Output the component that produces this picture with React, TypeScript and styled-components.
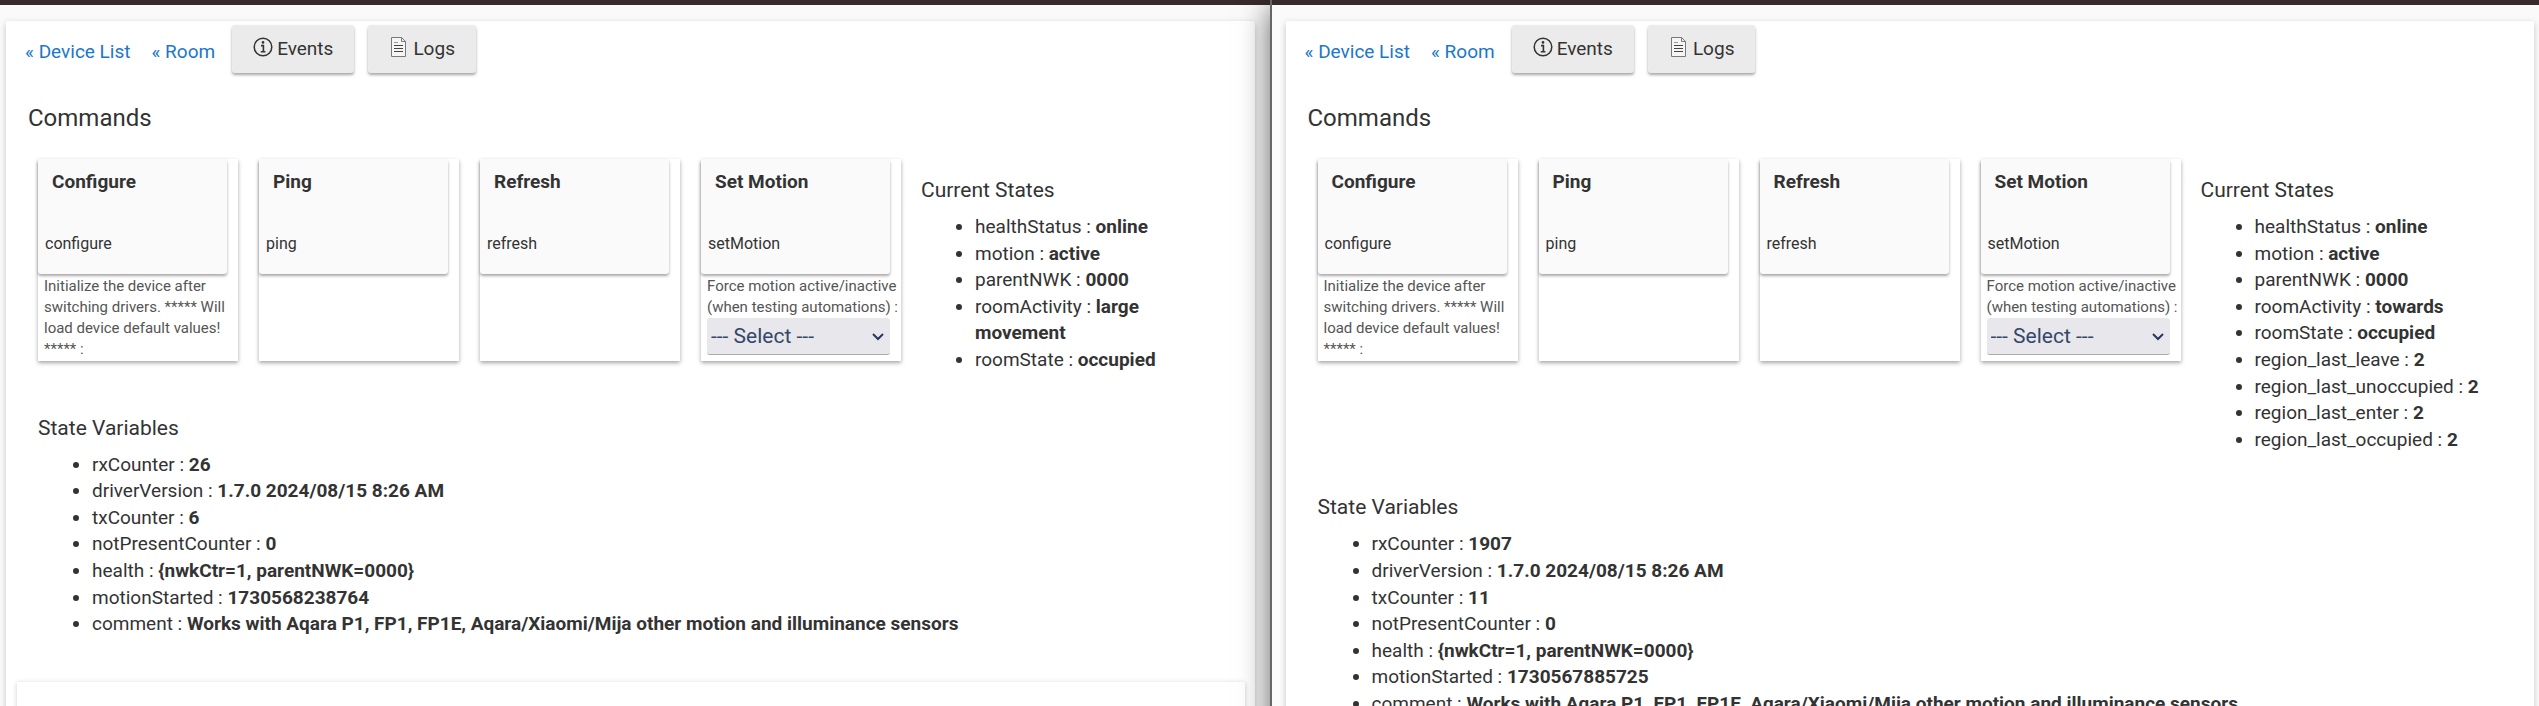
import React from 'react';
import styled, { createGlobalStyle } from 'styled-components';

const GlobalStyle = createGlobalStyle`
  * { box-sizing: border-box; }
  body {
    margin: 0;
    background: #fafafa;
    color: #333;
    font-family: Roboto, "Liberation Sans", sans-serif;
  }
`;

const Split = styled.div`
  display: grid;
  grid-template-columns: 1fr 1fr;
  height: 100vh;
  overflow: hidden;
`;

const Pane = styled.main<{ $front?: boolean }>`
  min-width: 0;
  height: 200vh;
  background: #fafafa;
  ${(p) =>
    p.$front
      ? `border-left: 2px solid #666;
         box-shadow: 0 8px 28px rgba(0, 0, 0, 0.6);
         z-index: 1;`
      : ''}
`;

const TopBar = styled.header`
  height: 5px;
  background: #382c2a;
`;

const Page = styled.section<{ $front?: boolean }>`
  margin: ${(p) => (p.$front ? '16px 5px 0 14px' : '16px 15px 0 6px')};
  padding: 4px 10px 0 11px;
  min-height: 100%;
  background: #fff;
  border-radius: 2px;
  box-shadow: 0 2px 6px rgba(0, 0, 0, 0.22);
`;

const Toolbar = styled.nav`
  display: flex;
  align-items: center;
  gap: 14px;
  height: 48px;
  padding-left: 8px;
`;

const Crumb = styled.a`
  margin-right: 7px;
  padding-top: 6px;
  color: #1a77c9;
  font-size: 19px;
  line-height: 24px;
  text-decoration: none;
  & + button { margin-left: -4px; }
`;

const ToolButton = styled.button`
  display: flex;
  align-items: center;
  gap: 4px;
  height: 48px;
  padding: 0 21px;
  border: 0;
  border-radius: 3px;
  background: #ebebeb;
  box-shadow: 0 2px 3px rgba(0, 0, 0, 0.35);
  color: #333;
  font: 400 19px/24px Roboto, sans-serif;
  svg { display: block; flex: none; margin-bottom: 4px; }
`;

const Heading = styled.h1`
  margin: 28px 0 24px;
  padding-left: 11px;
  font-size: 24px;
  font-weight: 400;
  line-height: 34px;
`;

const Body = styled.div`
  display: flex;
  align-items: flex-start;
  padding: 0 21px;
`;

const Tiles = styled.div`
  display: flex;
  flex: none;
  gap: 21px;
`;

const Tile = styled.article`
  width: 200px;
  height: 202px;
  background: #fff;
  box-shadow: 0 2px 4px rgba(0, 0, 0, 0.35);
`;

const TileButton = styled.button`
  display: flex;
  flex-direction: column;
  justify-content: space-between;
  width: 189px;
  height: 115px;
  padding: 11px 7px 18px;
  border: 0;
  border-radius: 3px;
  background: #fafafa;
  box-shadow: 0 2px 3px rgba(0, 0, 0, 0.35);
  color: #333;
  font: 400 16px/24px Roboto, sans-serif;
  text-align: left;
  strong { padding-left: 7px; font-size: 19px; font-weight: 700; }
`;

const Hint = styled.p`
  margin: 0;
  padding: 2px 0 0 6px;
  color: #555;
  font-size: 15px;
  line-height: 21px;
`;

const Select = styled.select`
  display: block;
  appearance: none;
  width: 183px;
  height: 37px;
  margin-left: 6px;
  padding: 0 4px;
  border: 0;
  border-bottom: 1px solid #aaa;
  border-radius: 3px;
  background: #e8e7ec;
  color: #354769;
  font: 400 21px/36px Roboto, sans-serif;
`;

const SelectBox = styled.div`
  display: grid;
  align-items: center;
  > * { grid-area: 1 / 1; }
  svg { margin-left: 171px; pointer-events: none; }
`;

const States = styled.section`
  flex: 1;
  min-width: 0;
  padding: 18px 0 0 20px;
`;

const Variables = styled.section`
  padding: 41px 21px 0 21px;
`;

const Title = styled.h2`
  margin: 0;
  font-size: 21px;
  font-weight: 400;
  line-height: 27px;
`;

const List = styled.ul`
  margin: 10px 0 0;
  padding: 0 0 0 54px;
  font-size: 19px;
  line-height: 1.4;
  strong { font-weight: 700; }
`;

const NextCard = styled.section`
  height: 200px;
  margin-top: 44px;
  background: #fff;
  box-shadow: 0 1px 5px rgba(0, 0, 0, 0.2);
`;

const InfoIcon = () => (
  <svg width="20" height="20" viewBox="0 0 20 20" fill="none" stroke="#333">
    <circle cx="10" cy="10" r="8.8" strokeWidth="1.5" />
    <path d="M8 8.6h2.4v6M7.8 14.8h4.6" strokeWidth="1.6" />
    <circle cx="10" cy="5.4" r="1.3" fill="#333" stroke="none" />
  </svg>
);

const PageIcon = () => (
  <svg width="20" height="20" viewBox="-1 0 20 20" fill="none" stroke="#7a7a7a">
    <path d="M1.5.5h10l4 4v15h-14z" fill="#f5f5f5" />
    <path d="M11.5.5v4h4" />
    <path d="M4 5.5h4" stroke="#999" />
    <path d="M4 8.5h9M4 11.5h9M4 14.5h9" stroke="#444" />
  </svg>
);

const Chevron = () => (
  <svg width="12" height="8" viewBox="0 0 12 8" fill="none" stroke="#27385a" strokeWidth="2">
    <path d="M1 1l5 5 5-5" />
  </svg>
);

type Entry = [string, string];

const Entries = ({ items }: { items: Entry[] }) => (
  <List>
    {items.map(([name, value]) => (
      <li key={name}>
        {name} : <strong>{value}</strong>
      </li>
    ))}
  </List>
);

interface DeviceProps {
  id: string;
  front?: boolean;
  states: Entry[];
  variables: Entry[];
}

const Device = ({ id, front, states, variables }: DeviceProps) => (
  <Pane $front={front}>
    <TopBar />
    <Page $front={front}>
      <Toolbar>
        <Crumb href="#devices">« Device List</Crumb>
        <Crumb href="#room">« Room</Crumb>
        <ToolButton type="button"><InfoIcon />Events</ToolButton>
        <ToolButton type="button"><PageIcon />Logs</ToolButton>
      </Toolbar>
      <Heading>Commands</Heading>
      <Body>
        <Tiles>
          <Tile>
            <TileButton type="button"><strong>Configure</strong><span>configure</span></TileButton>
            <Hint>
              Initialize the device after switching drivers. ***** Will load device default values! ***** :
            </Hint>
          </Tile>
          <Tile>
            <TileButton type="button"><strong>Ping</strong><span>ping</span></TileButton>
          </Tile>
          <Tile>
            <TileButton type="button"><strong>Refresh</strong><span>refresh</span></TileButton>
          </Tile>
          <Tile>
            <TileButton type="button"><strong>Set Motion</strong><span>setMotion</span></TileButton>
            <Hint>
              <label htmlFor={id}>Force motion active/inactive (when testing automations) :</label>
            </Hint>
            <SelectBox>
              <Select id={id} defaultValue="">
                <option value="">--- Select ---</option>
                <option>active</option>
                <option>inactive</option>
              </Select>
              <Chevron />
            </SelectBox>
          </Tile>
        </Tiles>
        <States>
          <Title>Current States</Title>
          <Entries items={states} />
        </States>
      </Body>
      <Variables>
        <Title>State Variables</Title>
        <Entries items={variables} />
      </Variables>
      <NextCard />
    </Page>
  </Pane>
);

const variables = (rx: string, tx: string, started: string): Entry[] => [
  ['rxCounter', rx],
  ['driverVersion', '1.7.0 2024/08/15 8:26 AM'],
  ['txCounter', tx],
  ['notPresentCounter', '0'],
  ['health', '{nwkCtr=1, parentNWK=0000}'],
  ['motionStarted', started],
  ['comment', 'Works with Aqara P1, FP1, FP1E, Aqara/Xiaomi/Mija other motion and illuminance sensors'],
];

const states = (activity: string): Entry[] => [
  ['healthStatus', 'online'],
  ['motion', 'active'],
  ['parentNWK', '0000'],
  ['roomActivity', activity],
  ['roomState', 'occupied'],
];

export default function App() {
  return (
    <>
      <GlobalStyle />
      <Split>
        <Device
          id="motion-left"
          states={states('large movement')}
          variables={variables('26', '6', '1730568238764')}
        />
        <Device
          id="motion-right"
          front
          states={[
            ...states('towards'),
            ['region_last_leave', '2'],
            ['region_last_unoccupied', '2'],
            ['region_last_enter', '2'],
            ['region_last_occupied', '2'],
          ]}
          variables={variables('1907', '11', '1730567885725')}
        />
      </Split>
    </>
  );
}
